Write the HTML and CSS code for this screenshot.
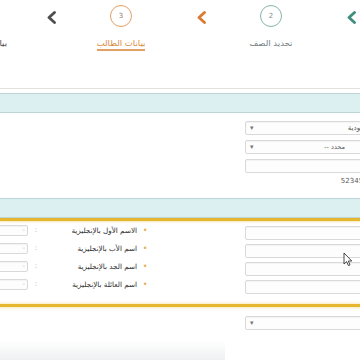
FILE: index.html
```html
<!DOCTYPE html>
<html lang="ar" dir="rtl">
<head>
<meta charset="utf-8">
<title>بيانات الطالب</title>
<link rel="stylesheet" href="styles.css">
</head>
<body>
<div class="page">
  <header class="steps">
    <div class="unit">
      <div class="chev chev-teal"><svg width="9" height="13" viewBox="0 0 9 13"><polyline points="7.5,1.5 2,6.5 7.5,11.5" fill="none" stroke="currentColor" stroke-width="2.8" stroke-linecap="round" stroke-linejoin="round"/></svg></div>
      <div class="step">
        <div class="circle circle-done">2</div>
        <div class="step-label label-done">تحديد الصف</div>
      </div>
    </div>
    <div class="unit">
      <div class="chev chev-orange"><svg width="9" height="13" viewBox="0 0 9 13"><polyline points="7.5,1.5 2,6.5 7.5,11.5" fill="none" stroke="currentColor" stroke-width="2.8" stroke-linecap="round" stroke-linejoin="round"/></svg></div>
      <div class="step">
        <div class="circle circle-active">3</div>
        <div class="step-label label-active">بيانات الطالب</div>
      </div>
    </div>
    <div class="unit">
      <div class="chev chev-dark"><svg width="9" height="13" viewBox="0 0 9 13"><polyline points="7.5,1.5 2,6.5 7.5,11.5" fill="none" stroke="currentColor" stroke-width="2.8" stroke-linecap="round" stroke-linejoin="round"/></svg></div>
      <div class="step step-next">
        <div class="circle circle-next"></div>
        <div class="step-label label-next">بيانات ولي الأمر</div>
      </div>
    </div>
  </header>

  <div class="band"></div>

  <section class="block">
    <div class="field select wide nat"><span class="val">السعودية</span><span class="caret">▾</span></div>
    <div class="field select wide gap sel2"><span class="val">محدد --</span><span class="caret">▾</span></div>
    <div class="field wide gap"></div>
    <div class="num">5234567</div>
  </section>

  <div class="band band-second"></div>
  <div class="gold"></div>

  <section class="rows">
    <div class="row">
      <div class="field rfield"></div>
      <div></div>
      <div class="bullet">•</div>
      <div class="lbl">الاسم الأول بالإنجليزية</div>
      <div class="colon">:</div>
      <div class="field lfield"><span>-</span></div>
    </div>
    <div class="row">
      <div class="field rfield"></div>
      <div></div>
      <div class="bullet">•</div>
      <div class="lbl">اسم الأب بالإنجليزية</div>
      <div class="colon">:</div>
      <div class="field lfield"><span>-</span></div>
    </div>
    <div class="row">
      <div class="field rfield"></div>
      <div></div>
      <div class="bullet">•</div>
      <div class="lbl">اسم الجد بالإنجليزية</div>
      <div class="colon">:</div>
      <div class="field lfield"><span>-</span></div>
    </div>
    <div class="row">
      <div class="field rfield"></div>
      <div></div>
      <div class="bullet">•</div>
      <div class="lbl">اسم العائلة بالإنجليزية</div>
      <div class="colon">:</div>
      <div class="field lfield"><span>-</span></div>
    </div>
  </section>

  <div class="gold gold-second"></div>

  <div class="field select wide last"><span class="val"></span><span class="caret">▾</span></div>

  <div class="shade"></div>

  <svg class="cursor" width="10" height="15" viewBox="0 0 10 15"><path d="M1 1 L1 12 L3.6 9.6 L5.4 13.6 L7 12.9 L5.3 9 L8.8 9 Z" fill="#fff" stroke="#333" stroke-width="0.9" stroke-linejoin="round"/></svg>
</div>
</body>
</html>
```

FILE: styles.css
```css
html, body {
  margin: 0;
  padding: 0;
  width: 360px;
  height: 360px;
  overflow: hidden;
  background: #ffffff;
}

.page {
  position: relative;
  width: 360px;
  height: 360px;
  overflow: hidden;
  direction: rtl;
  font-family: "DejaVu Sans", "Noto Sans", sans-serif;
  color: #444;
}

/* ---------- steps header ---------- */
.steps {
  height: 88px;
  border-bottom: 1px solid #e6e1e1;
  display: flex;
  overflow: hidden;
}

.unit {
  display: flex;
  flex: none;
}

.chev {
  width: 18px;
  flex: none;
  display: flex;
  justify-content: center;
  padding-top: 11px;
  align-self: flex-start;
}
.chev-teal { color: #3f8d7d; }
.chev-orange { color: #d97a30; }
.chev-dark { color: #4e4e4e; }

.step {
  width: 132px;
  flex: none;
  box-sizing: border-box;
  padding-inline-start: 10px;
  padding-top: 5px;
  display: flex;
  flex-direction: column;
  align-items: center;
}
.step-next {
  padding-inline-start: 0;
  padding-inline-end: 6px;
}

.circle {
  width: 22px;
  height: 22px;
  box-sizing: border-box;
  border-radius: 50%;
  border: 1.5px solid #ccc;
  display: flex;
  align-items: center;
  justify-content: center;
  font-size: 7px;
  color: #888;
}
.circle-done { border-color: #86b5ac; color: #7f9490; }
.circle-active { border-color: #e3a067; color: #8c7a6a; }
.circle-next { border-color: #bbb; }

.step-label {
  margin-top: 10px;
  font-size: 8.5px;
  line-height: 12px;
  white-space: nowrap;
}
.label-done { color: #748080; }
.label-active {
  color: #d98a3c;
  border-bottom: 2px solid #e3a064;
}
.label-next { color: #444; }

/* ---------- bands ---------- */
.band {
  margin-top: 4px;
  height: 20px;
  box-sizing: border-box;
  background: #dcf0f2;
  border-top: 1px solid #bcd6d8;
  border-bottom: 1px solid #bcd6d8;
}
.band-second {
  margin-top: 12px;
}

.gold {
  height: 3px;
  background: #e6b72e;
  box-shadow: 0 1px 2px rgba(240, 210, 120, 0.55);
}
.gold-second {
  margin-top: 7px;
  box-shadow: 0 0 3px 1px rgba(242, 212, 120, 0.5);
}

/* ---------- fields ---------- */
.block {
  padding-top: 8px;
}

.field {
  box-sizing: border-box;
  border: 1px solid #d9d9d9;
  border-radius: 2px;
  background: #fdfdfd;
  box-shadow: inset 0 1px 1px rgba(0, 0, 0, 0.04);
}

.wide {
  width: 125px;
  height: 14px;
  margin-right: -10px;
}
.gap { margin-top: 5px; }

.select {
  display: flex;
  justify-content: space-between;
  align-items: center;
  padding: 0 8px 0 4px;
  overflow: hidden;
}
.select .val {
  font-size: 7px;
  color: #555;
  white-space: nowrap;
}
.select .caret {
  font-size: 7px;
  color: #777;
  line-height: 1;
}

.nat {
  width: 138px;
  margin-right: -23px;
}
.sel2 {
  padding-right: 24px;
}
.sel2 .val {
  font-size: 6.5px;
}

.num {
  margin-top: 4px;
  margin-right: -12px;
  font-size: 7px;
  line-height: 9px;
  color: #555;
  text-align: right;
}

/* ---------- rows ---------- */
.rows {
  padding-top: 4px;
}

.row {
  display: grid;
  grid-template-columns: 115px 95px 10px 100px 8px 32px;
  height: 18px;
}

.rfield {
  width: 125px;
  height: 14px;
  margin-top: 1px;
  margin-right: -10px;
}

.bullet {
  text-align: center;
  color: #e4b24c;
  font-size: 8px;
  line-height: 11px;
}

.lbl {
  font-size: 7.2px;
  line-height: 11px;
  color: #2e2e2e;
  white-space: nowrap;
  text-align: right;
  padding-right: 3px;
}

.colon {
  text-align: center;
  color: #999;
  font-size: 7px;
  line-height: 11px;
}

.lfield {
  width: 60px;
  height: 11px;
  margin-right: 4px;
  display: flex;
  align-items: center;
  padding-right: 2px;
}
.lfield span {
  font-size: 7px;
  color: #c4c4c4;
  line-height: 1;
}

.last {
  margin-top: 9px;
}

.shade {
  margin-top: 10px;
  margin-right: 135px;
  height: 20px;
  background: linear-gradient(to bottom, #ffffff, #eef1f1);
}

.cursor {
  position: absolute;
  left: 343px;
  top: 252px;
}
```
